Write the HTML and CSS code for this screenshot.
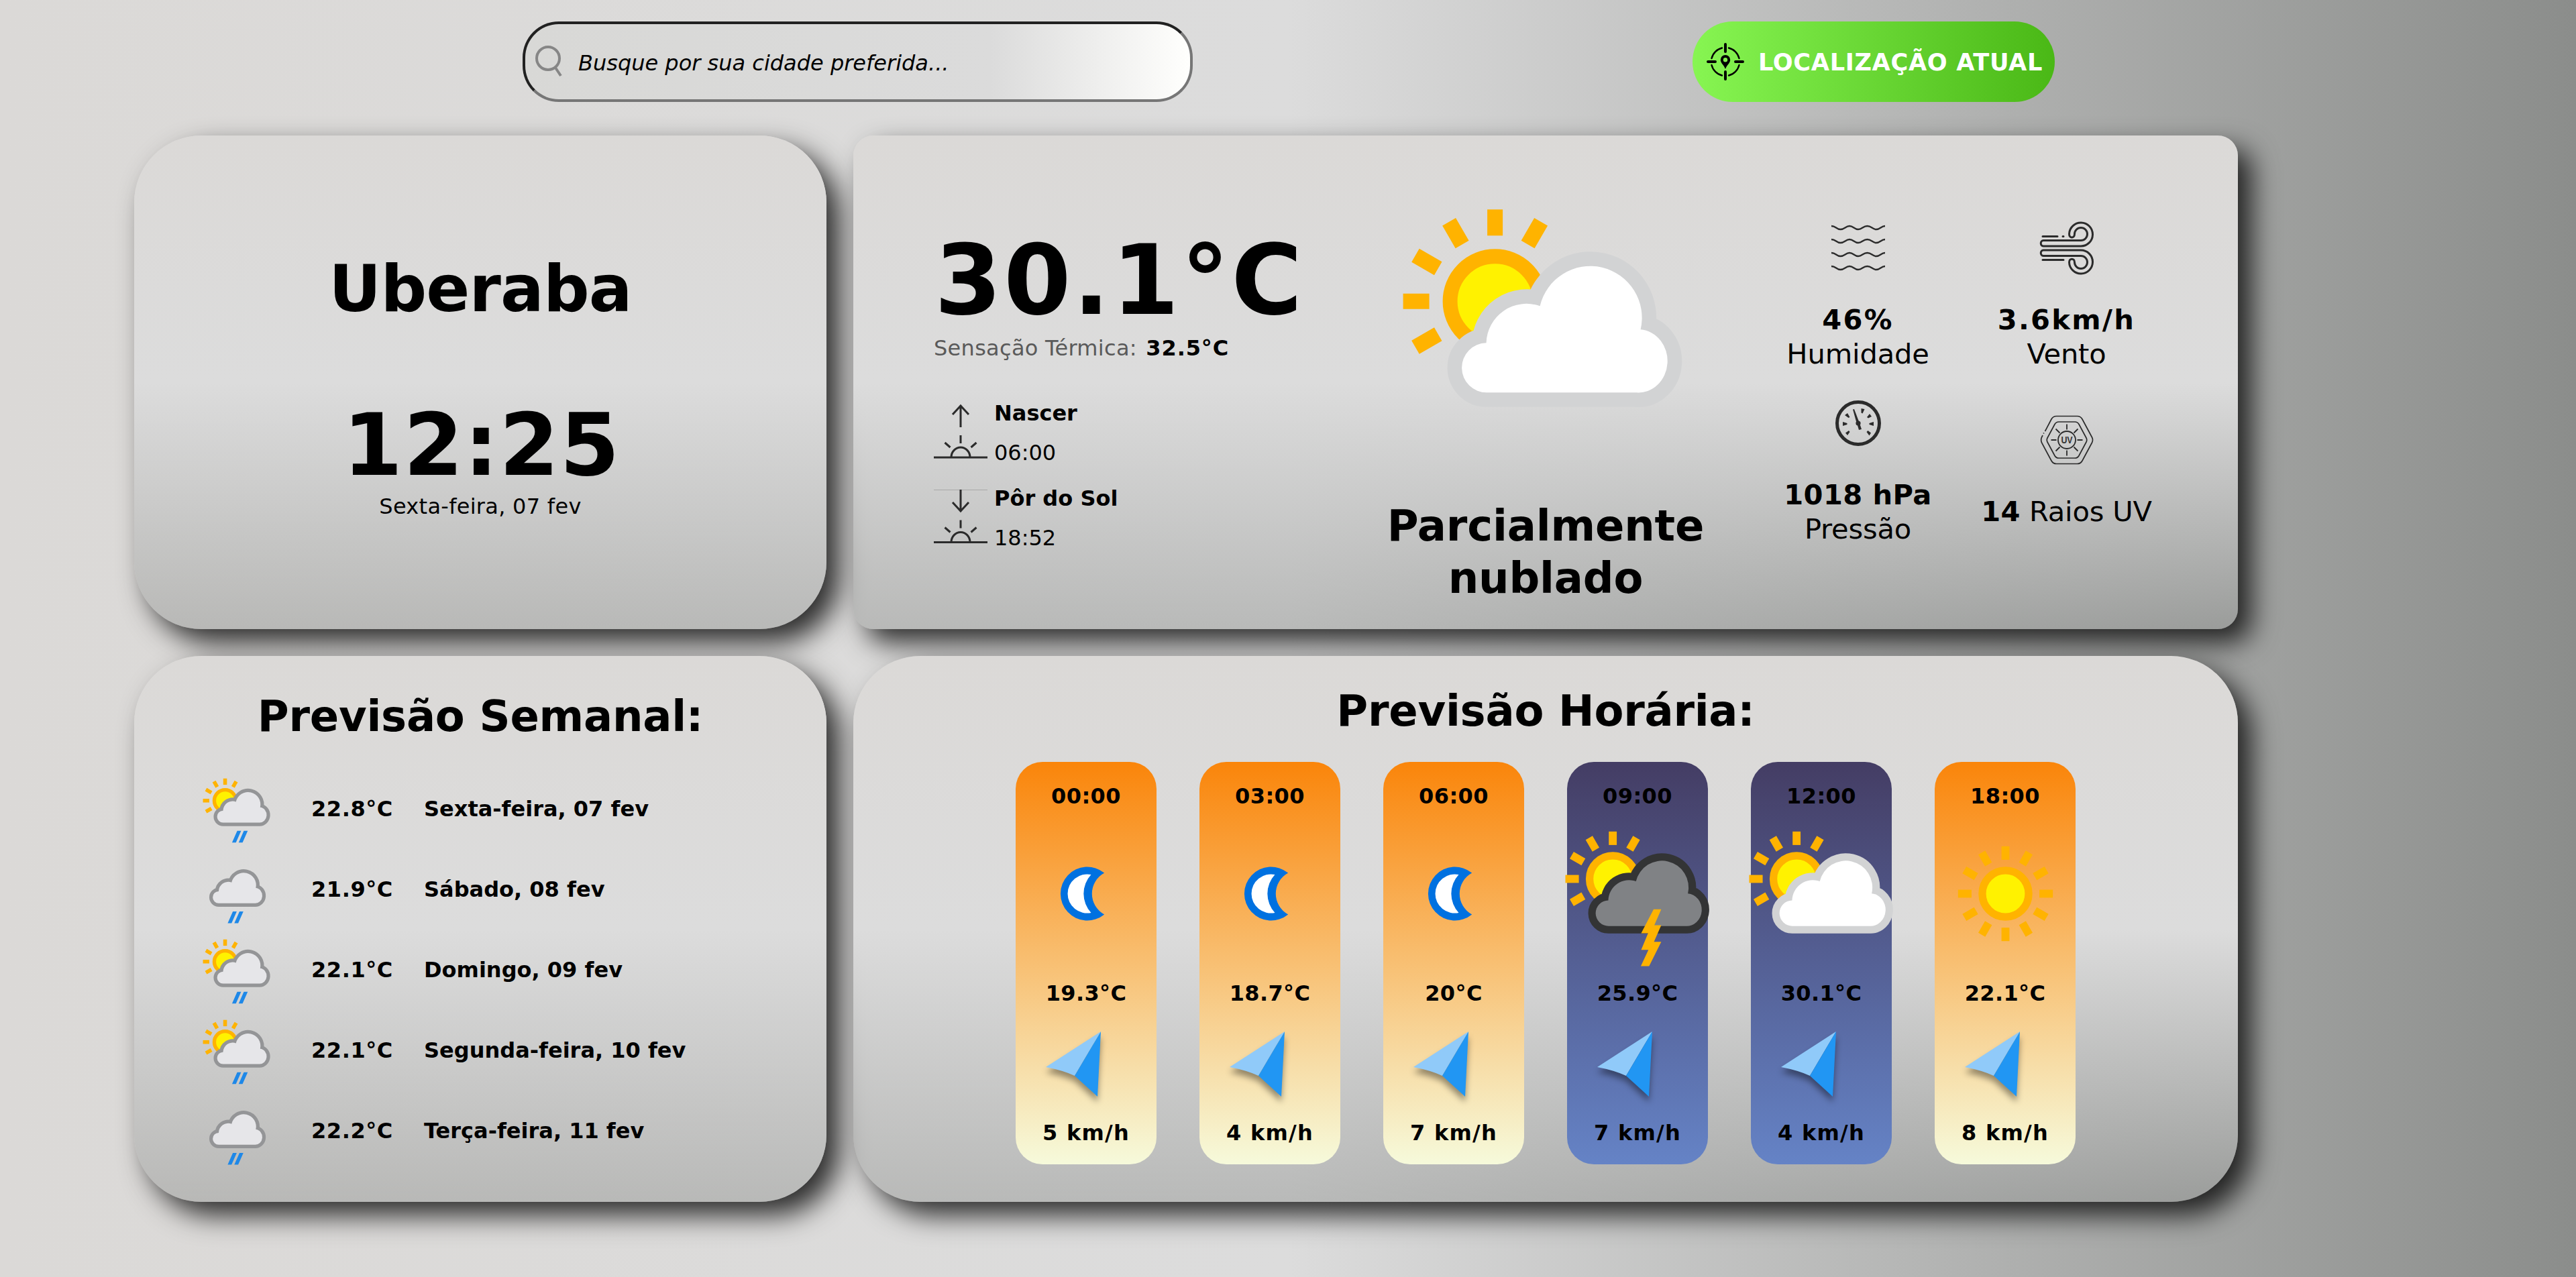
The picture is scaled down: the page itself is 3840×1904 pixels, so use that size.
FILE: index.html
```html
<!DOCTYPE html>
<html lang="pt-BR">
<head>
<meta charset="utf-8">
<title>Previsão do Tempo</title>
<link rel="stylesheet" href="styles.css">
</head>
<body>
<svg class="sprite" aria-hidden="true">
  <defs>
    <path id="ray" d="M-11.5-137h23v39h-23z" fill="#ffb300"/>
    <g id="sun-part">
      <use href="#ray" transform="translate(149 149)"/>
      <use href="#ray" transform="translate(149 149) rotate(30)"/>
      <use href="#ray" transform="translate(149 149) rotate(-30)"/>
      <use href="#ray" transform="translate(149 149) rotate(-60)"/>
      <use href="#ray" transform="translate(149 149) rotate(-90)"/>
      <use href="#ray" transform="translate(149 149) rotate(-120)"/>
      <circle cx="149" cy="149" r="67" fill="#fff200" stroke="#ffb300" stroke-width="22"/>
    </g>
    <path id="cloud" class="cloud" d="M137 285A37 37 0 0 1 136 211A60 60 0 0 1 216 156A77 77 0 0 1 366 191A43 47 0 0 1 360 285Z"/>
    <path id="rain" d="M218 336h24l-32 73h-24zM259 336h24l-32 73h-24z" fill="#1e88e8"/>
    <symbol id="partly" viewBox="1.4 -28.3 440 440"><use href="#sun-part"/><use href="#cloud" fill="#fff" stroke="#d2d3d4"/></symbol>
    <symbol id="storm" viewBox="1.4 -28.3 440 440"><use href="#sun-part"/><use href="#cloud" fill="#808285" stroke="#333435"/>
      <path d="M267 237h22l-20 46h20l-21 48h21l-35 70h-24l22-47h-21l20-48h-20z" fill="#ffb300"/></symbol>
    <symbol id="sun-rain" viewBox="1.4 -28.3 440 440"><use href="#sun-part"/><use href="#cloud" fill="#e6e6e9" stroke="#949597"/><use href="#rain" x="6"/></symbol>
    <symbol id="rainy" viewBox="1.4 -28.3 440 440"><g transform="translate(-27 1)"><use href="#cloud" fill="#e6e6e9" stroke="#949597"/><use href="#rain" x="6"/></g></symbol>
    <symbol id="sunny" viewBox="-220 -220 440 440">
      <use href="#ray"/><use href="#ray" transform="rotate(30)"/><use href="#ray" transform="rotate(60)"/><use href="#ray" transform="rotate(90)"/><use href="#ray" transform="rotate(120)"/><use href="#ray" transform="rotate(150)"/><use href="#ray" transform="rotate(180)"/><use href="#ray" transform="rotate(210)"/><use href="#ray" transform="rotate(240)"/><use href="#ray" transform="rotate(270)"/><use href="#ray" transform="rotate(300)"/><use href="#ray" transform="rotate(330)"/>
      <circle r="67" fill="#fff200" stroke="#ffb300" stroke-width="22"/></symbol>
    <symbol id="moon" viewBox="-113.5 -113.5 227 227">
      <path d="M26.700-31A40 40 0 1 0 26.700 31A35.300 35.300 0 0 1 26.700-31Z" fill="#0071e0"/>
      <path d="M7-28.500A29.100 29.100 0 1 0 7 28.500A42 42 0 0 1 7-28.500Z" fill="#fff"/></symbol>
    <symbol id="arrow" viewBox="0 0 140 110">
      <path d="M92 8L10 61Q36 66 53 74Z" fill="#90caf9"/><path d="M92 8L53 74L87 105Z" fill="#2196f3"/></symbol>
    <g id="half-sun"><path d="M0 79H80" stroke-width="3.2"/><path d="M26 79a14 15 0 0 1 28 0M40 46v12M16.5 57l8 7M63.500 57l-8 7"/></g>
  </defs>
</svg>

<header class="topbar">
  <label class="search">
    <svg class="search-icon" viewBox="0 0 40 48"><circle cx="19" cy="19" r="17"/><path d="M30 33l8 12"/></svg>
    <span class="search-text">Busque por sua cidade preferida...</span>
  </label>
  <button class="locate" type="button">
    <svg class="locate-icon" viewBox="0 0 56 56">
      <path d="M28 2v11M28 43v11M2 28h11M43 28h11" stroke-width="4"/>
      <path d="M33 7.500A21 21 0 0 1 48.500 23M48.500 33A21 21 0 0 1 33 48.500M23 48.500A21 21 0 0 1 7.500 33M7.500 23A21 21 0 0 1 23 7.500" stroke-width="2.400"/>
      <path class="pin" d="M28 18a7.200 7.200 0 0 0-7.200 7.200C20.800 30 26 33 28 39c2-6 7.200-9 7.200-13.800A7.200 7.200 0 0 0 28 18zm0 4a3.200 3.200 0 1 1 0 6.400 3.200 3.200 0 0 1 0-6.400z"/>
    </svg>
    <span>LOCALIZAÇÃO ATUAL</span>
  </button>
</header>

<main class="board">
  <section class="card place">
    <h1 class="city">Uberaba</h1>
    <p class="clock">12:25</p>
    <p class="date">Sexta-feira, 07 fev</p>
  </section>

  <section class="card now">
    <div class="reading">
      <p class="temp">30.1°C</p>
      <p class="feels"><span class="feels-label">Sensação Térmica:</span> <b class="feels-value">32.5°C</b></p>
      <div class="suntime">
        <svg class="line-icon" viewBox="0 0 80 84"><path d="M40 34V2M28 15L40 2L52 15"/><use href="#half-sun"/></svg>
        <p><b>Nascer</b><br>06:00</p>
      </div>
      <div class="suntime">
        <svg class="line-icon" viewBox="0 0 80 84"><path d="M0 .5H80" stroke="#a8a8a8" stroke-width="1"/><path d="M40 0V32M28 19L40 32L52 19"/><use href="#half-sun" y="-.5"/></svg>
        <p><b>Pôr do Sol</b><br>18:52</p>
      </div>
    </div>
    <div class="sky">
      <svg class="sky-icon"><use href="#partly"/></svg>
      <h2 class="condition">Parcialmente nublado</h2>
    </div>
    <div class="details">
      <div class="detail">
        <svg class="line-icon" viewBox="0 0 80 80"><path d="M0 7C7 7 7 12 13.500 12S21 7 27 7S34 12 40 12S47 7 53.500 7S61 12 67 12S74 7 80 7M0 27C7 27 7 32 13.500 32S21 27 27 27S34 32 40 32S47 27 53.500 27S61 32 67 32S74 27 80 27M0 47C7 47 7 52 13.500 52S21 47 27 47S34 52 40 52S47 47 53.500 47S61 52 67 52S74 47 80 47M0 67C7 67 7 72 13.500 72S21 67 27 67S34 72 40 72S47 67 53.500 67S61 72 67 72S74 67 80 67" stroke-width="2.400"/></svg>
        <p><b class="num wide">46%</b><br>Humidade</p>
      </div>
      <div class="detail">
        <svg class="line-icon" viewBox="0 0 80 80">
          <path d="M4 22.500H26M34 22.500h1M4 57.500H35" stroke-linecap="round"/>
          <path d="M5 28.500H61A9.500 9.500 0 1 0 51.500 19C51.500 25.500 43.500 25.500 43.500 19A17.500 17.500 0 1 1 61 37H5C0 37 0 28.500 5 28.500ZM5 51.500H61A9.500 9.500 0 1 1 51.500 61C51.500 54.500 43.500 54.500 43.500 61A17.500 17.500 0 1 0 61 43H5C0 43 0 51.500 5 51.500Z"/>
        </svg>
        <p><b class="num wide">3.6km/h</b><br>Vento</p>
      </div>
      <div class="detail">
        <svg class="line-icon" viewBox="0 0 80 80">
          <circle cx="40" cy="40" r="31.500" stroke-width="5"/>
          <g class="solid"><path d="M32 19.500l2-.5 8 21-4 1z"/><circle cx="40" cy="40" r="3.600"/><path d="M38 40h4l3 9-4 1z"/>
          <path d="M44.500 18l5 1-3 6.500-2-1zM20 28l4-3 3.500 6-2 1zM53 31l4-5 3 4-5 2.500zM17 38l6.500 2v2L17 44zM63 38v6l-6.500-2v-2zM21 54.500l5-3.500 1.500 2L24 58zM52.500 53l2-2 4.500 3.500-2.500 4z"/></g>
        </svg>
        <p><b class="num">1018 hPa</b><br>Pressão</p>
      </div>
      <div class="detail">
        <svg class="line-icon" viewBox="0 0 80 80">
          <path d="M7.500 27L17 9Q19.500 4.500 24.500 4.500H55.500Q60.500 4.500 63 9L77.500 36Q79.500 40 77.500 44L63 71Q60.500 75.500 55.500 75.500H24.500Q19.500 75.500 17 71L2.500 44Q.8 40 2.500 36L4 33M5.200 30.500l.6-1.200M28 13H52Q56 13 58 16.500L69 37Q70.500 40 69 43L58 63.500Q56 67 52 67H28Q24 67 22 63.500L11 43Q9.500 40 11 37L22 16.500Q24 13 28 13Z" stroke-width="1.700"/>
          <circle cx="40" cy="40" r="13" stroke-width="1.800"/>
          <path d="M40 16.500v8M40 55.500v8M16.500 40h8M55.500 40h8M23.500 23.500l6 6M50.500 50.500l6 6M23.500 56.500l6-6M50.500 29.500l6-6" stroke-width="1.800"/>
          <text class="uv" x="40" y="45" textLength="17" lengthAdjust="spacingAndGlyphs">UV</text>
        </svg>
        <p><b class="num">14</b> Raios UV</p>
      </div>
    </div>
  </section>

  <section class="card week">
    <h2 class="title">Previsão Semanal:</h2>
    <ul class="days">
      <li class="day"><svg class="day-icon"><use href="#sun-rain"/></svg><span class="day-temp">22.8°C</span><span>Sexta-feira, 07 fev</span></li>
      <li class="day"><svg class="day-icon"><use href="#rainy"/></svg><span class="day-temp">21.9°C</span><span>Sábado, 08 fev</span></li>
      <li class="day"><svg class="day-icon"><use href="#sun-rain"/></svg><span class="day-temp">22.1°C</span><span>Domingo, 09 fev</span></li>
      <li class="day"><svg class="day-icon"><use href="#sun-rain"/></svg><span class="day-temp">22.1°C</span><span>Segunda-feira, 10 fev</span></li>
      <li class="day"><svg class="day-icon"><use href="#rainy"/></svg><span class="day-temp">22.2°C</span><span>Terça-feira, 11 fev</span></li>
    </ul>
  </section>

  <section class="card hourly">
    <h2 class="title">Previsão Horária:</h2>
    <div class="hours">
      <article class="hour"><p>00:00</p><svg class="hour-icon"><use href="#moon"/></svg><p>19.3°C</p><svg class="wind-icon"><use href="#arrow"/></svg><p class="wind">5 km/h</p></article>
      <article class="hour"><p>03:00</p><svg class="hour-icon"><use href="#moon"/></svg><p>18.7°C</p><svg class="wind-icon"><use href="#arrow"/></svg><p class="wind">4 km/h</p></article>
      <article class="hour"><p>06:00</p><svg class="hour-icon"><use href="#moon"/></svg><p>20°C</p><svg class="wind-icon"><use href="#arrow"/></svg><p class="wind">7 km/h</p></article>
      <article class="hour blue"><p>09:00</p><svg class="hour-icon"><use href="#storm"/></svg><p>25.9°C</p><svg class="wind-icon"><use href="#arrow"/></svg><p class="wind">7 km/h</p></article>
      <article class="hour blue"><p>12:00</p><svg class="hour-icon"><use href="#partly"/></svg><p>30.1°C</p><svg class="wind-icon"><use href="#arrow"/></svg><p class="wind">4 km/h</p></article>
      <article class="hour"><p>18:00</p><svg class="hour-icon"><use href="#sunny"/></svg><p>22.1°C</p><svg class="wind-icon"><use href="#arrow"/></svg><p class="wind">8 km/h</p></article>
    </div>
  </section>
</main>
</body>
</html>
```
FILE: styles.css
```css
* { box-sizing: border-box; }
body {
  margin: 0;
  min-height: 1904px;
  background: linear-gradient(90deg, #dbd9d7 0%, #dcdcdc 50%, #8b8d8b 100%);
  color: #000;
  font: 32px/38px Verdana, "DejaVu Sans", sans-serif;
}
h1, h2, p, ul { margin: 0; padding: 0; }
svg { display: block; flex: none; }
.sprite { position: absolute; width: 0; height: 0; }
.cloud { stroke-width: 43; paint-order: stroke; }

.topbar { display: flex; height: 202px; padding: 32px 0 0 779px; }
.search {
  display: flex;
  align-items: center;
  width: 999px;
  height: 120px;
  padding-left: 15px;
  border: 4px solid;
  border-color: #212121 #767676 #767676 #212121;
  border-radius: 54px;
  background: linear-gradient(90deg, #d8d8d6, #dbdbdb 70%, #fffffd 100%);
}
.search-icon { width: 40px; height: 48px; fill: none; stroke: #868686; stroke-width: 4; }
.search-text { margin: 4px 0 0 24px; font-style: italic; }
.locate {
  display: flex;
  align-items: center;
  width: 540px;
  height: 120px;
  margin-left: 745px;
  padding: 0 0 0 21px;
  border: 0;
  border-radius: 60px;
  background: linear-gradient(90deg, #87f552, #4ab816);
  color: #fff;
  font: bold 35.2px/42px Verdana, "DejaVu Sans", sans-serif;
  white-space: nowrap;
}
.locate span { margin: 2px 0 0 21px; letter-spacing: .018em; }
.locate-icon { width: 56px; height: 56px; fill: none; stroke: #000; stroke-linecap: round; }
.pin { fill: #000; fill-rule: evenodd; stroke: none; }

.board {
  display: grid;
  grid-template-columns: 1032px 2064px;
  grid-template-rows: 736px 814px;
  gap: 40px;
  margin-left: 200px;
}
.card {
  border-radius: 100px;
  background: linear-gradient(180deg, #dbd9d7, #dcdcdc 50%, rgba(148, 150, 148, .49) 100%);
  box-shadow: 20px 20px 40px rgba(0, 0, 0, .8);
}
.now { border-radius: 30px; }

.place { display: flex; flex-direction: column; align-items: center; padding-top: 181px; }
.city { font-size: 96px; line-height: 96px; letter-spacing: -.009em; }
.clock { margin: 121px 0 8px; padding-left: 4px; font-size: 128px; line-height: 128px; font-weight: bold; letter-spacing: .01em; }
.date { letter-spacing: .009em; }

.now {
  display: grid;
  grid-template-columns: 600px 500px 622px;
  column-gap: 61px;
  padding-left: 120px;
}
.reading { padding-top: 144px; white-space: nowrap; }
.temp { padding-left: 1px; font-size: 144px; line-height: 144px; font-weight: bold; letter-spacing: .021em; }
.feels { margin: 10px 0 48px; letter-spacing: .009em; }
.feels-label { color: #5a5a5a; }
.feels-value { margin-left: 3px; letter-spacing: .028em; }
.suntime { display: flex; align-items: center; gap: 10px; height: 118px; margin-bottom: 9px; line-height: 59px; }
.suntime p { padding-top: 1px; }
.suntime .line-icon { height: 84px; }
.line-icon { width: 80px; height: 80px; fill: none; stroke: #2b2b2b; stroke-width: 3; overflow: visible; }
.solid { fill: #2b2b2b; stroke: none; }
.uv { fill: #333; stroke: none; font: bold 14px "Liberation Sans", sans-serif; text-anchor: middle; }

.sky { display: flex; flex-direction: column; align-items: center; padding-top: 70px; }
.sky-icon { width: 440px; height: 440px; margin-right: 5px; }
.condition { margin: 33px 0 0 2px; font-size: 64px; line-height: 78px; text-align: center; letter-spacing: -.003em; }

.details {
  display: grid;
  grid-template-columns: 311px 311px;
  grid-template-rows: 225px 225px;
  row-gap: 36px;
  align-items: center;
  padding-top: 127px;
  align-content: start;
}
.detail { display: flex; flex-direction: column; align-items: center; gap: 41px; margin-top: -1px; font-size: 41.6px; line-height: 51px; text-align: center; letter-spacing: -.004em; }
.num { letter-spacing: .01em; }
.num.wide { letter-spacing: .055em; }

.title { font-size: 64px; line-height: 78px; text-align: center; letter-spacing: -.004em; }
.week { padding-top: 51px; }
.days { margin-top: 39px; padding-left: 100px; list-style: none; font-weight: bold; }
.day { display: flex; align-items: center; height: 120px; }
.day-icon { width: 106px; height: 106px; margin-bottom: 5px; }
.day-temp { width: 168px; margin-left: 58px; letter-spacing: .018em; }

.hourly { padding-top: 43px; }
.hours { display: flex; justify-content: center; gap: 64px; margin-top: 37px; }
.hour {
  display: flex;
  flex-direction: column;
  align-items: center;
  width: 210px;
  height: 600px;
  padding-top: 31.5px;
  border-radius: 40px;
  background: linear-gradient(180deg, #fa850a, #f6fadb);
  font-weight: bold;
  letter-spacing: .012em;
}
.blue { background: linear-gradient(180deg, #443d64, #6583c6); }
.hour-icon { width: 227px; height: 227px; margin: 13px 0 16px; }
.wind-icon { width: 140px; height: 110px; margin: 30.5px 0 30px; overflow: visible; filter: drop-shadow(0 8px 5px rgba(0, 0, 0, .4)); }
.wind { letter-spacing: .038em; }
```
